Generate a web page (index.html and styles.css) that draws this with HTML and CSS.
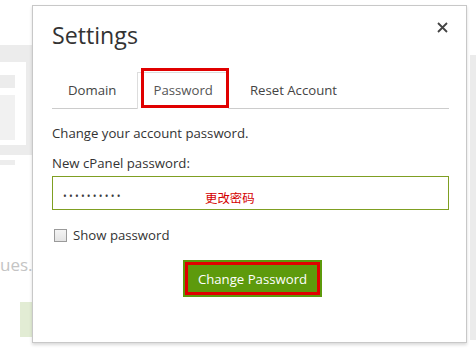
FILE: index.html
```html
<!DOCTYPE html>
<html>
<head>
  <title>Settings</title>
  <link rel="stylesheet" href="styles.css">
</head>
<body>

  <div class="page">
    <div class="page-side">
      <div class="side-panel">
        <div class="side-inner">
          <div class="side-bar"></div>
          <div class="side-block"></div>
        </div>
      </div>
      <div class="side-line"></div>
      <p class="side-text">ues.</p>
      <div class="side-btn"></div>
    </div>
    <div class="page-scroll"></div>
  </div>

  <div class="modal">
    <div class="modal-header">
      <h1>Settings</h1>
      <svg class="close" width="11" height="11" viewBox="0 0 11 11">
        <path d="M1 1 L10 10 M10 1 L1 10" stroke="#444" stroke-width="1.8" fill="none"/>
      </svg>
    </div>

    <ul class="tabs">
      <li class="tab">Domain</li>
      <li class="tab active">Password</li>
      <li class="tab">Reset Account</li>
    </ul>

    <p class="intro">Change your account password.</p>
    <label class="field-label">New cPanel password:</label>
    <div class="input">
      <span class="dots">&bull;&bull;&bull;&bull;&bull;&bull;&bull;&bull;&bull;&bull;</span>
      <span class="note">更改密码</span>
    </div>

    <div class="check-row">
      <span class="checkbox"></span>
      <span>Show password</span>
    </div>

    <div class="actions">
      <button class="btn-change">Change Password</button>
    </div>
  </div>

</body>
</html>
```

FILE: styles.css
```css
body {
  margin: 0;
  background: #fff;
  color: #333;
  font-family: 'Open Sans', 'Noto Sans CJK SC', sans-serif;
  overflow: hidden;
}

/* faded page behind the dialog */
.page {
  display: flex;
  justify-content: space-between;
  height: 351px;
}
.page-side {
  width: 32px;
}
.side-panel {
  margin-top: 45px;
  height: 110px;
  background: #ececec;
  padding: 17px 6px 10px 0;
  box-sizing: border-box;
}
.side-inner {
  background: #fff;
  height: 100%;
  padding-top: 13px;
  box-sizing: border-box;
}
.side-bar {
  width: 15px;
  height: 13px;
  background: #ececec;
}
.side-block {
  width: 15px;
  height: 45px;
  margin-top: 7px;
  background: #f1f1f1;
}
.side-line {
  width: 15px;
  height: 5px;
  margin-top: 5px;
  background: #ededed;
}
.side-text {
  margin: 88px 0 0;
  text-align: right;
  padding-right: 5px;
  font-size: 17px;
  color: #c4c4c4;
  white-space: nowrap;
  overflow: hidden;
}
.side-btn {
  margin: 26px 0 0 20px;
  width: 12px;
  height: 35px;
  background: #e2ecd4;
}
.page-scroll {
  width: 6px;
  margin: 55px 0 11px;
  background: #ebebeb;
}

/* dialog */
.modal {
  position: absolute;
  left: 32px;
  top: 5px;
  width: 435px;
  height: 338px;
  box-sizing: border-box;
  padding: 13px 17px 0 19px;
  background: #fff;
  border: 1px solid #c8c8c8;
  box-shadow: 0 2px 3px rgba(0, 0, 0, 0.15);
}
.modal-header {
  display: flex;
  justify-content: space-between;
  align-items: flex-start;
}
.modal-header h1 {
  margin: 0;
  font-size: 23.2px;
  line-height: 32px;
  font-weight: normal;
  color: #333;
}
.close {
  margin: 3px 1px 0 0;
}

.tabs {
  display: flex;
  list-style: none;
  margin: 21px 0 0;
  padding: 0;
  border-bottom: 1px solid #ccc;
}
.tab {
  padding: 0 15px;
  margin-right: 5px;
  line-height: 35px;
  font-size: 13.2px;
  color: #444;
  border: 1px solid transparent;
  border-bottom: none;
  margin-bottom: -1px;
  position: relative;
}
.tab.active {
  color: #555;
  background: #fff;
  border-color: #ddd;
  padding-bottom: 1px;
}
.tab.active::after {
  content: "";
  position: absolute;
  left: 3px;
  top: -5px;
  width: 82px;
  height: 34px;
  border: 3px solid #e00000;
}

.intro {
  margin: 14px 0 0;
  font-size: 13.2px;
  line-height: 20px;
}
.field-label {
  display: block;
  margin-top: 10px;
  font-size: 13.2px;
  line-height: 20px;
}
.input {
  position: relative;
  margin-top: 3px;
  height: 34px;
  border: 1px solid #7f9f22;
  box-sizing: border-box;
  padding: 3px 0 0 10px;
}
.dots {
  font-size: 10px;
  letter-spacing: 2.2px;
  line-height: 32px;
  color: #3a3a3a;
}
.note {
  position: absolute;
  left: 152px;
  top: 14px;
  font-size: 12.4px;
  line-height: 16px;
  color: #d40000;
}

.check-row {
  display: flex;
  align-items: center;
  gap: 6px;
  margin-top: 15px;
  font-size: 13.2px;
  line-height: 20px;
  padding-left: 2px;
}
.checkbox {
  width: 11px;
  height: 11px;
  border: 1px solid #9a9a9a;
  background: linear-gradient(#f4f4f4, #e4e4e4);
}

.actions {
  display: flex;
  justify-content: center;
  margin-top: 15px;
  padding-left: 4px;
}
.btn-change {
  height: 37px;
  padding: 0 13px;
  background: #5d9a0c;
  border: 2px solid #5d9a0c;
  outline: 3px solid #e00000;
  outline-offset: -5px;
  color: #fff;
  font-family: 'Open Sans', sans-serif;
  font-size: 13.2px;
}
```
